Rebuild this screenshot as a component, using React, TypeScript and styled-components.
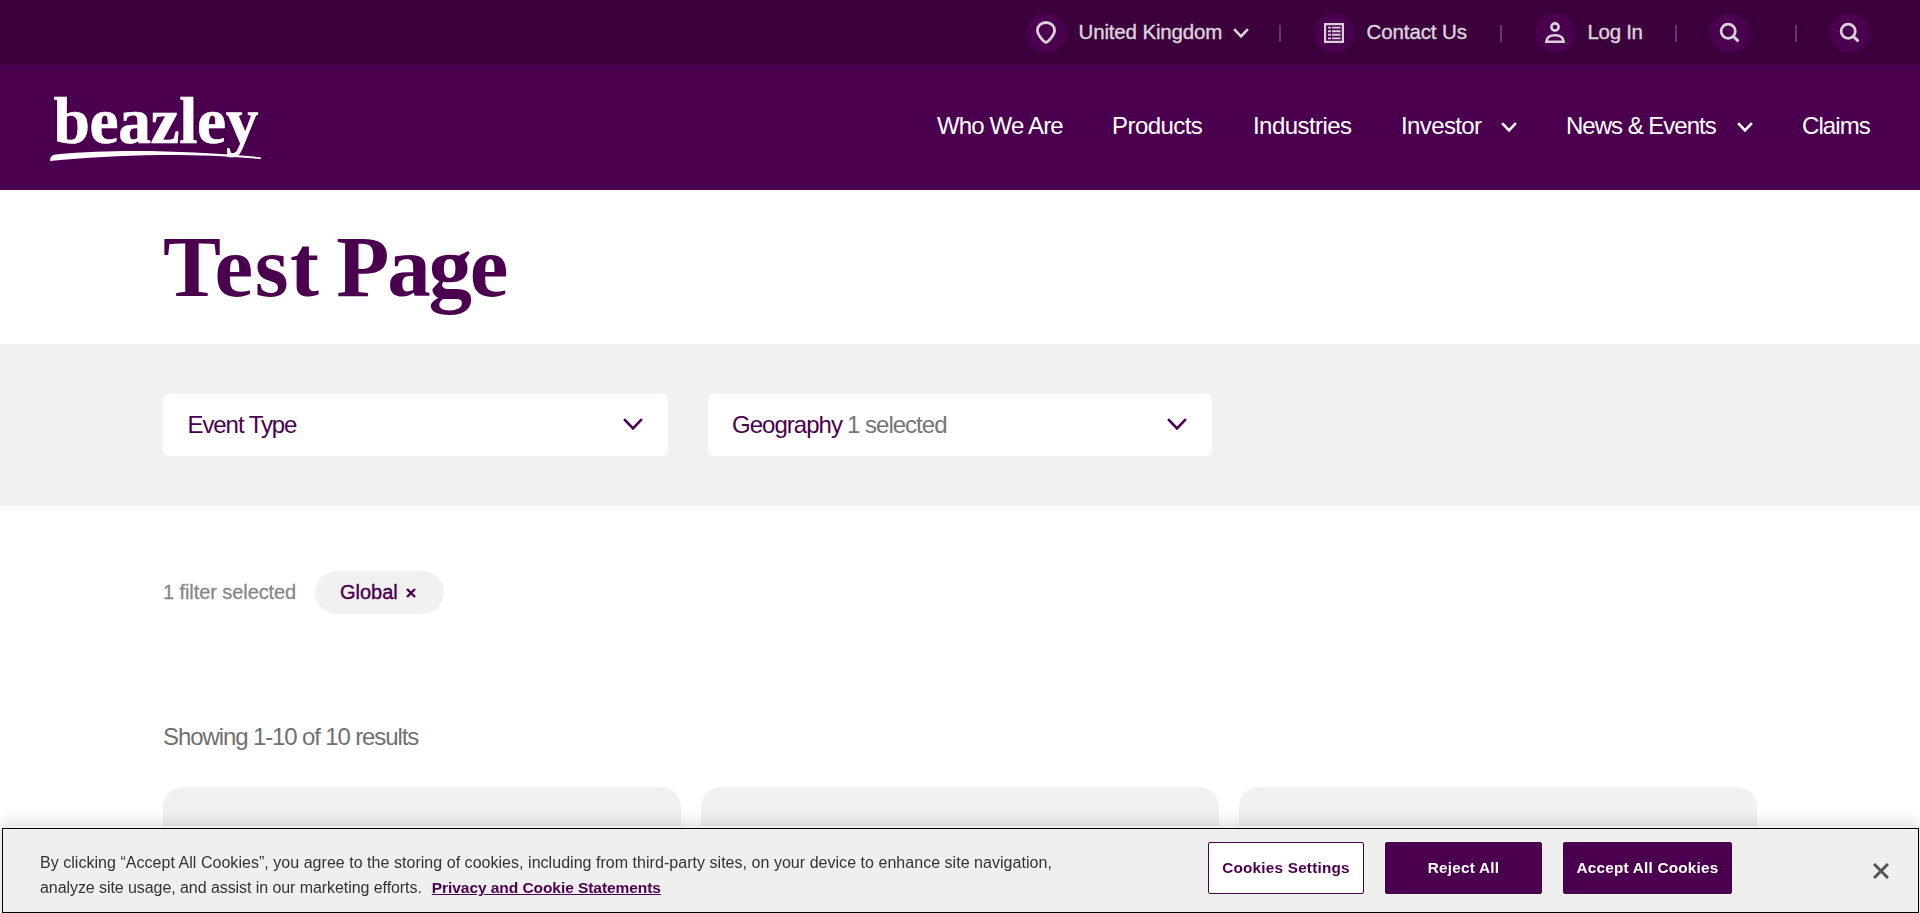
import React from 'react';
import styled, { createGlobalStyle } from 'styled-components';

const GlobalStyle = createGlobalStyle`
  * { box-sizing: border-box; }
  html, body { margin: 0; padding: 0; height: 100%; overflow: hidden; background: #fff; }
  body { font-family: 'Liberation Sans', Arial, sans-serif; color: #4b004f; }
  #root { height: 100%; }
  button { font-family: inherit; cursor: pointer; }
`;

const Page = styled.div`
  display: flex;
  flex-direction: column;
  height: 913px;
  overflow: hidden;
`;

const TopBar = styled.div`
  flex: none;
  display: flex;
  justify-content: flex-end;
  align-items: center;
  height: 65px;
  padding: 1px 50px 0 0;
  background: #3b003c;
  color: #d9d3d9;
`;

const TopItem = styled.a<{ $width: number }>`
  display: flex;
  align-items: center;
  flex: none;
  width: ${p => p.$width}px;
  height: 40px;
`;

const IconDisc = styled.span`
  display: flex;
  align-items: center;
  justify-content: center;
  flex: none;
  width: 40px;
  height: 40px;
  border-radius: 50%;
  background: #4b004f;
`;

const Label = styled.span<{ $size: number; $spacing?: number; $word?: number; $stroke?: number; $color?: string }>`
  font-size: ${p => p.$size}px;
  letter-spacing: ${p => p.$spacing ?? 0}px;
  word-spacing: ${p => p.$word ?? 0}px;
  -webkit-text-stroke: ${p => p.$stroke ?? 0}px currentColor;
  color: ${p => p.$color ?? 'inherit'};
  white-space: nowrap;
`;

const TopLabel = styled(Label)`
  margin: -2px 0 0 12.5px;
`;

const TopChevron = styled.span`
  display: flex;
  margin: 0 0 0 auto;
`;

const Divider = styled.span<{ $before: number; $after: number }>`
  flex: none;
  width: 2px;
  height: 17px;
  margin: 1px ${p => p.$after}px 0 ${p => p.$before}px;
  background: #6a3470;
`;

const Header = styled.header`
  flex: none;
  display: flex;
  justify-content: space-between;
  height: 125px;
  padding: 0 50px;
  background: #4b004f;
  color: #fff;
`;

const Logo = styled.svg`
  margin-top: 5px;
  overflow: visible;
`;

const Nav = styled.nav`
  display: flex;
  align-items: center;
  gap: 50px;
  height: 122px;
`;

const NavItem = styled.a<{ $width: number }>`
  display: flex;
  align-items: center;
  justify-content: space-between;
  width: ${p => p.$width}px;
  padding-left: 1px;
`;

const NavChevron = styled.span`
  display: flex;
  margin-right: -2px;
  padding-top: 3px;
`;

const TitleBand = styled.div`
  flex: none;
  height: 154px;
  padding: 27px 163px 0;
`;

const Title = styled.h1`
  margin: 0;
  font-family: 'Liberation Serif', 'Times New Roman', serif;
  font-size: 87px;
  line-height: 100px;
  font-weight: 700;
  word-spacing: -6px;
`;

const TitleWord = styled.span<{ $spacing: number }>`
  letter-spacing: ${p => p.$spacing}px;
`;

const FilterBand = styled.div`
  flex: none;
  display: flex;
  gap: 40px;
  height: 162px;
  padding: 50px 163px;
  background: #f1f1f1;
`;

const Select = styled.div`
  display: flex;
  align-items: center;
  justify-content: space-between;
  width: 504.5px;
  height: 62px;
  padding: 0 25px 1px 24.5px;
  border-radius: 6px;
  background: #fff;
`;

const SelectText = styled.span`
  display: flex;
  gap: 5px;
`;

const Results = styled.main`
  flex: none;
  display: flex;
  flex-direction: column;
  padding: 65px 163px 0;
`;

const ActiveFilters = styled.div`
  display: flex;
  align-items: center;
  height: 43px;
`;

const FilterCount = styled.div`
  width: 152px;
`;

const Chip = styled.button`
  display: flex;
  align-items: center;
  justify-content: space-between;
  width: 129px;
  height: 43px;
  padding: 0 28px 0 25px;
  border: 0;
  border-radius: 22px;
  background: #f1f1f1;
  color: #4b004f;
`;

const Showing = styled.p`
  margin: 108px 0 0;
  height: 65px;
  line-height: 30px;
`;

const Cards = styled.div`
  display: grid;
  grid-template-columns: repeat(3, 518px);
  gap: 20px;
`;

const Card = styled.div`
  height: 300px;
  border-radius: 20px;
  background: #f1f1f1;
`;

const CookieBanner = styled.div`
  position: fixed;
  left: 0;
  right: 0;
  bottom: 0;
  height: 87px;
  padding: 2px 1px 0 2px;
  background: #efefef;
  box-shadow: 0 0 18px rgba(0, 0, 0, 0.2);
`;

const CookieFrame = styled.div`
  display: flex;
  height: 85px;
  border: 1px solid #000;
  padding: 13px 29px 0 37px;
`;

const CookieText = styled.div`
  width: 1168px;
  padding-top: 8px;
  line-height: 25px;
`;

const CookieLine = styled.div`
  display: flex;
`;

const CookieLink = styled.a`
  margin-left: 10px;
  color: #4b004f;
  font-size: 15.5px;
  font-weight: 700;
  letter-spacing: -0.06px;
  text-decoration: underline;
  white-space: nowrap;
`;

const CookieButtons = styled.div`
  display: flex;
  gap: 21px;
`;

const CookieButton = styled.button<{ $width: number; $outlined?: boolean }>`
  width: ${p => p.$width}px;
  height: 52px;
  padding: 0 0 1px;
  border: 1px solid #4b004f;
  border-radius: 2px;
  background: ${p => (p.$outlined ? '#fff' : '#4b004f')};
  color: ${p => (p.$outlined ? '#4b004f' : '#fff')};
  font-size: 15.3px;
  font-weight: 700;
  letter-spacing: 0.22px;
  white-space: nowrap;
`;

const CookieClose = styled.span`
  display: flex;
  margin: 21px 0 0 auto;
  height: 16px;
  color: #565656;
`;

const Chevron = ({ width, height, stroke }: { width: number; height: number; stroke: number }) => (
  <svg width={width} height={height} viewBox={`0 0 ${width} ${height}`} fill="none" stroke="currentColor" strokeWidth={stroke}>
    <path d={`M1.1 1.2 L${width / 2} ${height - 2.6} L${width - 1.1} 1.2`} />
  </svg>
);

const Cross = ({ size, stroke }: { size: number; stroke: number }) => (
  <svg width={size} height={size} viewBox={`0 0 ${size} ${size}`} fill="none" stroke="currentColor" strokeWidth={stroke}>
    <path d={`M1 1 L${size - 1} ${size - 1} M${size - 1} 1 L1 ${size - 1}`} />
  </svg>
);

const PinIcon = () => (
  <svg width="40" height="40" viewBox="0 0 40 40" fill="none" stroke="currentColor" strokeWidth="2.8">
    <path d="M20 29.4 C18.4 29.4 11.4 22 11.4 17.6 C11.4 12.8 15.2 9.5 20 9.5 C24.8 9.5 28.6 12.8 28.6 17.6 C28.6 22 21.6 29.4 20 29.4 Z" />
  </svg>
);

const ListIcon = () => (
  <svg width="40" height="40" viewBox="0 0 40 40" fill="none" stroke="currentColor">
    <rect x="11.1" y="11.1" width="17.8" height="17.8" strokeWidth="2.2" />
    <path d="M14 14.6 H17 M14 18.2 H17 M14 21.8 H17 M14 25.4 H17 M18 14.6 H26.5 M18 18.2 H26.5 M18 21.8 H26.5 M18 25.4 H26.5" strokeWidth="1.9" />
  </svg>
);

const PersonIcon = () => (
  <svg width="40" height="40" viewBox="0 0 40 40" fill="none" stroke="currentColor" strokeWidth="2.6">
    <circle cx="20" cy="14" r="3.6" />
    <path d="M11.4 28.7 C11.6 24.4 15 22.2 20 22.2 C25 22.2 28.4 24.4 28.6 28.7 Z" />
  </svg>
);

const SearchIcon = () => (
  <svg width="40" height="40" viewBox="0 0 40 40" fill="none" stroke="currentColor" strokeWidth="2.7">
    <circle cx="18.2" cy="18.3" r="7.1" />
    <path d="M23.2 23.4 L28.5 28.4" strokeWidth="2.9" />
  </svg>
);

export default function App() {
  return (
    <>
      <GlobalStyle />
      <Page>
        <TopBar>
          <TopItem $width={223}>
            <IconDisc><PinIcon /></IconDisc>
            <TopLabel $size={20.5} $spacing={-0.15} $stroke={0.4}>United Kingdom</TopLabel>
            <TopChevron><Chevron width={16} height={11} stroke={2.6} /></TopChevron>
          </TopItem>
          <Divider $before={30} $after={33} />
          <TopItem $width={153}>
            <IconDisc><ListIcon /></IconDisc>
            <TopLabel $size={20.5} $spacing={-0.1} $stroke={0.4}>Contact Us</TopLabel>
          </TopItem>
          <Divider $before={33} $after={33} />
          <TopItem $width={107}>
            <IconDisc><PersonIcon /></IconDisc>
            <TopLabel $size={20.5} $spacing={-0.3} $stroke={0.4}>Log In</TopLabel>
          </TopItem>
          <Divider $before={33} $after={33} />
          <TopItem $width={40}><IconDisc><SearchIcon /></IconDisc></TopItem>
          <Divider $before={45} $after={33} />
          <TopItem $width={40}><IconDisc><SearchIcon /></IconDisc></TopItem>
        </TopBar>

        <Header>
          <Logo width="240" height="110" viewBox="50 70 240 110" fill="#fff">
            <text x="53.5" y="142.5" fontFamily="'Liberation Serif', 'Times New Roman', serif" fontWeight="700" fontSize="65.5" letterSpacing="-0.4" stroke="#fff" strokeWidth="0.6">beazley</text>
            <path d="M50 161 C50 157.5 51.5 155.2 55.5 154.5 C90 151 120 150.7 150 151 C195 152 230 154 261 157.4 L261 159 C225 155.8 195 154.8 160 155 C120 155.5 85 157.5 50 161 Z" />
          </Logo>
          <Nav>
            <NavItem $width={125}><Label $size={24} $spacing={-0.85}>Who We Are</Label></NavItem>
            <NavItem $width={91}><Label $size={24} $spacing={-0.55}>Products</Label></NavItem>
            <NavItem $width={98}><Label $size={24} $spacing={-0.55}>Industries</Label></NavItem>
            <NavItem $width={115}>
              <Label $size={24} $spacing={-0.62}>Investor</Label>
              <NavChevron><Chevron width={16} height={11} stroke={2.6} /></NavChevron>
            </NavItem>
            <NavItem $width={186}>
              <Label $size={24} $spacing={-1}>News &amp; Events</Label>
              <NavChevron><Chevron width={16} height={11} stroke={2.6} /></NavChevron>
            </NavItem>
            <NavItem $width={69}><Label $size={24} $spacing={-0.9}>Claims</Label></NavItem>
          </Nav>
        </Header>

        <TitleBand>
          <Title>
            <TitleWord $spacing={1.5}>Test</TitleWord> <TitleWord $spacing={-2.2}>Page</TitleWord>
          </Title>
        </TitleBand>

        <FilterBand>
          <Select>
            <Label $size={24} $spacing={-1.08}>Event Type</Label>
            <Chevron width={20} height={13} stroke={2.6} />
          </Select>
          <Select>
            <SelectText>
              <Label $size={24} $spacing={-0.98}>Geography</Label>
              <Label $size={24} $spacing={-0.98} $color="#757575">1 selected</Label>
            </SelectText>
            <Chevron width={20} height={13} stroke={2.6} />
          </Select>
        </FilterBand>

        <Results>
          <ActiveFilters>
            <FilterCount><Label $size={20} $spacing={-0.08} $stroke={0.3} $color="#888">1 filter selected</Label></FilterCount>
            <Chip>
              <Label $size={20} $stroke={0.4}>Global</Label>
              <Cross size={10} stroke={2.4} />
            </Chip>
          </ActiveFilters>
          <Showing><Label $size={24} $spacing={-1.08} $word={-0.2} $color="#707070">Showing 1-10 of 10 results</Label></Showing>
          <Cards><Card /><Card /><Card /></Cards>
        </Results>
      </Page>

      <CookieBanner>
        <CookieFrame>
          <CookieText>
            <CookieLine>
              <Label $size={16} $spacing={0.035} $color="#333">By clicking “Accept All Cookies”, you agree to the storing of cookies, including from third-party sites, on your device to enhance site navigation,</Label>
            </CookieLine>
            <CookieLine>
              <Label $size={16} $spacing={-0.07} $color="#333">analyze site usage, and assist in our marketing efforts.</Label>
              <CookieLink>Privacy and Cookie Statements</CookieLink>
            </CookieLine>
          </CookieText>
          <CookieButtons>
            <CookieButton $width={156} $outlined>Cookies Settings</CookieButton>
            <CookieButton $width={157}>Reject All</CookieButton>
            <CookieButton $width={169}>Accept All Cookies</CookieButton>
          </CookieButtons>
          <CookieClose><Cross size={16} stroke={3} /></CookieClose>
        </CookieFrame>
      </CookieBanner>
    </>
  );
}
